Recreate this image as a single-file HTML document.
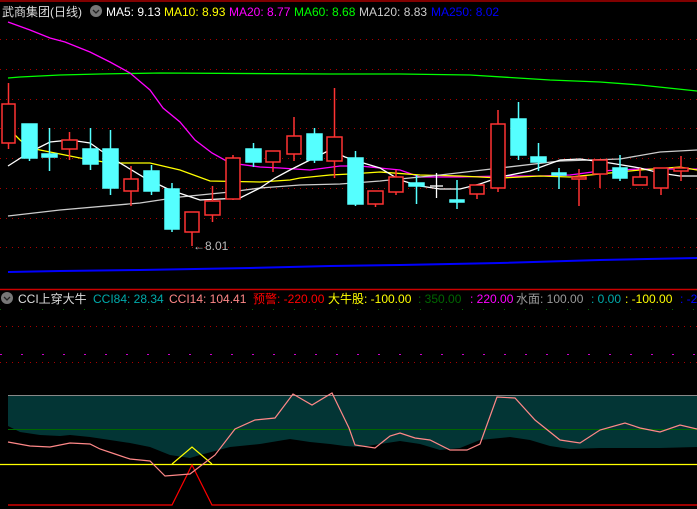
<!DOCTYPE html>
<html><head><meta charset="utf-8"><style>
html,body{margin:0;padding:0;background:#000;width:697px;height:509px;overflow:hidden}
svg{display:block}
text{font-family:"Liberation Sans","Noto Sans CJK SC",sans-serif;font-size:12px}
</style></head><body>
<svg width="697" height="509" viewBox="0 0 697 509" xmlns="http://www.w3.org/2000/svg">
<rect width="697" height="509" fill="#000"/>
<line x1="0" y1="1" x2="697" y2="1" stroke="#a00" stroke-width="1.5"/>
<g stroke="#a00" stroke-dasharray="1,5" stroke-width="1">
<line x1="0" y1="39.5" x2="697" y2="39.5"/><line x1="0" y1="69.5" x2="697" y2="69.5"/>
<line x1="0" y1="99.5" x2="697" y2="99.5"/><line x1="0" y1="128.5" x2="697" y2="128.5"/>
<line x1="0" y1="158.5" x2="697" y2="158.5"/><line x1="0" y1="188.5" x2="697" y2="188.5"/>
<line x1="0" y1="218.5" x2="697" y2="218.5"/><line x1="0" y1="247.5" x2="697" y2="247.5"/>
<line x1="0" y1="326.5" x2="697" y2="326.5"/><line x1="0" y1="362.5" x2="697" y2="362.5"/>
</g>
<line x1="0" y1="309.5" x2="697" y2="309.5" stroke="#060" stroke-dasharray="1,20"/>
<line x1="0" y1="354.5" x2="697" y2="354.5" stroke="#c0c" stroke-dasharray="2,19"/>
<!-- MA lines -->
<g fill="none" stroke-width="1.3">
<polyline stroke="#0f0" points="8,78 20,77 40,76 60,75 100,74 160,73 330,74 400,74 470,75 550,80 600,82 640,85 697,91"/>
<polyline stroke="#00f" stroke-width="2" points="8,272 60,271 140,270 250,268 330,266 400,265 500,263 600,260 697,258"/>
<polyline stroke="#f0f" points="8,22 30,30 50,38 65,42 90,52 110,62 130,73 150,90 163,108 180,122 195,140 212,153 230,163 260,167 280,168 310,170 340,166 360,166 400,170 420,177 460,177 500,176 540,176 570,175 600,171 640,169 697,169"/>
<polyline stroke="#ff0" points="8,128 20,140 30,148 55,153 80,158 110,163 150,163 180,170 210,181 260,182 290,180 300,178 330,175 350,174 380,172 420,175 460,176 500,178 540,176 570,177 600,174 640,170 680,167 697,170"/>
<polyline stroke="#ccc" points="8,216 60,210 140,203 180,197 230,192 260,188 300,185 340,184 380,181 440,175 500,168 560,161 620,159 660,152 697,150"/>
<polyline stroke="#fff" points="8,166 30,152 50,142 70,140 90,143 100,150 120,163 145,178 170,190 200,200 220,199 240,198 260,188 275,178 290,170 310,160 330,150 345,157 360,162 380,168 400,180 420,186 440,189 460,189 480,184 500,177 530,171 560,160 580,159 610,163 640,168 660,173 680,176 697,176"/>
</g>
<!-- candles -->
<g stroke="#f33" stroke-width="1.5" fill="#000">
<line x1="8.5" y1="83" x2="8.5" y2="149"/><rect x="2" y="104" width="13" height="39"/>
<line x1="69.5" y1="132" x2="69.5" y2="160"/><rect x="62" y="140" width="15" height="9"/>
<line x1="131" y1="166" x2="131" y2="206"/><rect x="124" y="179" width="14" height="12"/>
<line x1="192" y1="232" x2="192" y2="246"/><rect x="185" y="212" width="14" height="20"/>
<line x1="212.5" y1="186" x2="212.5" y2="222"/><rect x="205" y="201" width="15" height="14"/>
<line x1="233" y1="155" x2="233" y2="200"/><rect x="226" y="158" width="14" height="41"/>
<line x1="273" y1="162" x2="273" y2="172"/><rect x="266" y="151" width="14" height="11"/>
<line x1="294" y1="117" x2="294" y2="161"/><rect x="287" y="136" width="14" height="18"/>
<line x1="334.5" y1="88" x2="334.5" y2="178"/><rect x="327" y="137" width="15" height="24"/>
<line x1="375.5" y1="204" x2="375.5" y2="207"/><rect x="368" y="191" width="15" height="13"/>
<line x1="396" y1="170" x2="396" y2="195"/><rect x="389" y="177" width="14" height="15"/>
<line x1="477" y1="194" x2="477" y2="199"/><rect x="470" y="185" width="14" height="9"/>
<line x1="498" y1="110" x2="498" y2="192"/><rect x="491" y="124" width="14" height="64"/>
<line x1="579" y1="169" x2="579" y2="206"/><rect x="572" y="177" width="14" height="2"/>
<line x1="600" y1="160" x2="600" y2="188"/><rect x="593" y="160" width="14" height="14"/>
<line x1="640" y1="168" x2="640" y2="177"/><rect x="633" y="177" width="14" height="8"/>
<line x1="661" y1="168" x2="661" y2="195"/><rect x="654" y="168" width="14" height="20"/>
<line x1="681" y1="156" x2="681" y2="181"/><rect x="674" y="168" width="14" height="3"/>
</g>
<g stroke="#5ff" stroke-width="1.5" fill="#5ff">
<line x1="29.5" y1="124" x2="29.5" y2="161"/><rect x="22" y="124" width="15" height="34"/>
<line x1="49.5" y1="128" x2="49.5" y2="171"/><rect x="42" y="154" width="15" height="3"/>
<line x1="90.5" y1="128" x2="90.5" y2="170"/><rect x="83" y="149" width="15" height="15"/>
<line x1="110.5" y1="130" x2="110.5" y2="195"/><rect x="103" y="149" width="15" height="39"/>
<line x1="151.5" y1="165" x2="151.5" y2="195"/><rect x="144" y="171" width="15" height="20"/>
<line x1="172" y1="183" x2="172" y2="232"/><rect x="165" y="189" width="14" height="40"/>
<line x1="253.5" y1="143" x2="253.5" y2="167"/><rect x="246" y="149" width="15" height="13"/>
<line x1="314.5" y1="128" x2="314.5" y2="163"/><rect x="307" y="134" width="15" height="26"/>
<line x1="355.5" y1="151" x2="355.5" y2="206"/><rect x="348" y="158" width="15" height="46"/>
<line x1="416.5" y1="175" x2="416.5" y2="204"/><rect x="409" y="183" width="15" height="3"/>
<line x1="457" y1="180" x2="457" y2="209"/><rect x="450" y="200" width="14" height="2"/>
<line x1="518.5" y1="102" x2="518.5" y2="160"/><rect x="511" y="119" width="15" height="36"/>
<line x1="538.5" y1="143" x2="538.5" y2="171"/><rect x="531" y="157" width="15" height="5"/>
<line x1="559" y1="168" x2="559" y2="189"/><rect x="552" y="173" width="14" height="2"/>
<line x1="620" y1="155" x2="620" y2="181"/><rect x="613" y="168" width="14" height="10"/>
</g>
<g stroke="#fff" stroke-width="1.3"><line x1="436.5" y1="173" x2="436.5" y2="198"/><line x1="430" y1="186" x2="443" y2="186"/></g>
<text x="193" y="250" fill="#bbb" font-size="11">←8.01</text>
<!-- header -->
<text x="2" y="16" fill="#ddd" font-size="13">武商集团(日线)</text>
<circle cx="96" cy="11" r="6" fill="#777"/><path d="M93 10 L96 13 L99 10" stroke="#222" fill="none" stroke-width="1.3"/>
<text x="106" y="16" fill="#fff">MA5: 9.13</text>
<text x="164" y="16" fill="#ff0">MA10: 8.93</text>
<text x="229" y="16" fill="#f0f">MA20: 8.77</text>
<text x="294" y="16" fill="#0f0">MA60: 8.68</text>
<text x="359" y="16" fill="#ccc">MA120: 8.83</text>
<text x="431" y="16" fill="#00f">MA250: 8.02</text>
<!-- separator -->
<line x1="0" y1="289.5" x2="697" y2="289.5" stroke="#c00" stroke-width="1.5"/>
<circle cx="7" cy="298" r="6" fill="#777"/><path d="M4 297 L7 300 L10 297" stroke="#222" fill="none" stroke-width="1.3"/>
<text x="18" y="303" fill="#ddd">CCI上穿大牛</text>
<text x="93" y="303" fill="#0aa">CCI84: 28.34</text>
<text x="169" y="303" fill="#f88">CCI14: 104.41</text>
<text x="253" y="303" fill="#f00">预警: -220.00</text>
<text x="328" y="303" fill="#ff0">大牛股: -100.00</text>
<text x="418" y="303" fill="#060">: 350.00</text>
<text x="470" y="303" fill="#f0f">: 220.00</text>
<text x="516" y="303" fill="#999">水面: 100.00</text>
<text x="591" y="303" fill="#0aa">: 0.00</text>
<text x="625" y="303" fill="#ff0">: -100.00</text>
<text x="680" y="303" fill="#00f">: -2</text>
<!-- CCI panel -->
<path d="M8,395 L697,395 L697,447 L660,448 L600,448 L570,449 L550,446 L530,440 L510,437 L480,440 L460,448 L440,450 L420,444 L400,441 L380,444 L360,447 L345,446 L330,444 L310,442 L290,439 L260,444 L230,447 L200,455 L190,458 L170,455 L150,447 L130,443 L110,440 L90,437 L70,435 L60,436 L40,435 L20,432 L8,426 Z" fill="#033535"/>
<line x1="8" y1="395.5" x2="697" y2="395.5" stroke="#888"/>
<line x1="8" y1="429.5" x2="697" y2="429.5" stroke="#060"/>
<line x1="0" y1="464.5" x2="697" y2="464.5" stroke="#ff0" stroke-width="1.2"/>
<polyline fill="none" stroke="#f00" stroke-width="1.2" points="8,505 172,505 192,465 212,505 697,505"/>
<polyline fill="none" stroke="#ff0" stroke-width="1.2" points="172,464 192,447 212,464"/>
<polyline fill="none" stroke="#f88" stroke-width="1.2" points="8,442 30,446 50,447 70,443 90,444 100,449 115,454 130,459 150,461 165,476 190,474 215,455 235,429 255,420 275,418 293,394 312,405 332,393 349,428 355,445 375,448 390,436 400,433 415,438 430,440 450,450 467,450 480,444 497,397 515,398 535,420 560,440 580,443 600,430 625,423 640,428 660,432 680,425 697,429"/>
</svg>
</body></html>
